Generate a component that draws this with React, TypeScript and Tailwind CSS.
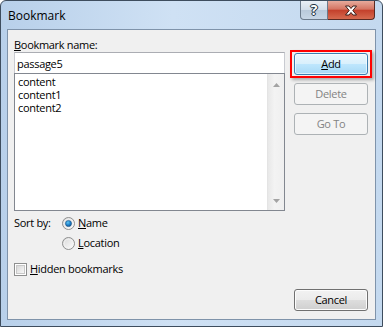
import type { ReactNode } from "react";

type ButtonProps = {
  children: ReactNode;
  variant?: "normal" | "default" | "disabled";
};

function DialogButton({ children, variant = "normal" }: ButtonProps) {
  const look =
    variant === "default"
      ? "border-[#3c7fb1] bg-[linear-gradient(to_bottom,#eaf6fd_0%,#d9f0fc_48%,#bee6fd_52%,#a7d9f5_100%)] text-black shadow-[inset_0_0_0_1px_rgba(255,255,255,0.6)]"
      : variant === "disabled"
        ? "border-[#adb2b5] bg-[#f4f4f4] text-[#838383]"
        : "border-[#707070] bg-[linear-gradient(to_bottom,#f2f2f2_0%,#ebebeb_48%,#dddddd_52%,#cfcfcf_100%)] text-black shadow-[inset_0_0_0_1px_#fcfcfc]";
  return (
    <div className={`flex h-[22px] w-[74px] items-center justify-center rounded-[3px] border text-[11px] ${look}`}>
      {children}
    </div>
  );
}

function Radio({ checked }: { checked?: boolean }) {
  return (
    <svg width="13" height="13" viewBox="0 0 13 13" className="shrink-0">
      <defs>
        <linearGradient id="radioFill" x1="0" y1="0" x2="1" y2="1">
          <stop offset="0" stopColor="#d6d6d6" />
          <stop offset="1" stopColor="#ffffff" />
        </linearGradient>
        <radialGradient id="radioDot" cx="0.4" cy="0.35" r="0.7">
          <stop offset="0" stopColor="#5ec4f2" />
          <stop offset="0.6" stopColor="#1a7cc6" />
          <stop offset="1" stopColor="#0d4f8c" />
        </radialGradient>
      </defs>
      <circle cx="6.5" cy="6.5" r="6" fill="url(#radioFill)" stroke="#8e8f8f" />
      <circle cx="6.5" cy="6.5" r="4.4" fill="none" stroke="#f4f4f4" strokeWidth="0.8" />
      {checked && <circle cx="6.5" cy="6.5" r="3.1" fill="url(#radioDot)" stroke="#1b4f7d" strokeWidth="0.5" />}
    </svg>
  );
}

function Checkbox() {
  return (
    <div className="flex h-[13px] w-[13px] shrink-0 items-center justify-center border border-[#8e8f8f] bg-white">
      <div className="h-[9px] w-[9px] border border-[#c8c8c8] bg-[linear-gradient(135deg,#d8d8d8,#f8f8f8)]" />
    </div>
  );
}

function Arrow({ up }: { up?: boolean }) {
  return (
    <svg width="7" height="4" viewBox="0 0 7 4">
      <path d={up ? "M0 4 L3.5 0 L7 4 Z" : "M0 0 L3.5 4 L7 0 Z"} fill="#a3a3a3" />
    </svg>
  );
}

const bookmarks = ["content", "content1", "content2"];

export default function App() {
  return (
    <div className="flex h-[327px] w-[383px] flex-col rounded-t-[6px] border border-[#3e4d5e] bg-[linear-gradient(to_right,#b8d0ea_0%,#cfe1f4_45%,#c4d9ef_100%)] px-[6px] pb-[6px] font-['Segoe_UI','Open_Sans',sans-serif] text-[11px] tracking-[-0.3px] text-black">
      {/* title bar */}
      <div className="flex h-[28px] items-start justify-between">
        <span className="pt-[6px] pl-[1px] text-[12px] tracking-normal text-black">Bookmark</span>
        <div className="mr-[1px] flex">
          <div className="flex h-[19px] w-[28px] items-center justify-center rounded-bl-[4px] border border-t-0 border-[#6b7a8b] bg-[linear-gradient(to_bottom,#e9eff6_0%,#d2dde9_50%,#b9c9da_51%,#c7d6e6_100%)]">
            <span className="text-[14px] font-bold leading-none text-white [text-shadow:0_0_1px_#243446,0_0_1px_#243446,1px_0_0_#243446,-1px_0_0_#243446,0_1px_0_#243446,0_-1px_0_#243446]">
              ?
            </span>
          </div>
          <div className="flex h-[19px] w-[47px] items-center justify-center rounded-br-[4px] border border-l-0 border-t-0 border-[#5a2a22] bg-[linear-gradient(to_bottom,#e7aa9c_0%,#d57563_45%,#c4412c_52%,#d66a4f_100%)]">
            <svg width="14" height="11" viewBox="0 0 14 11">
              <path
                d="M1.5 1 L5 1 L7 3.5 L9 1 L12.5 1 L8.8 5.5 L12.5 10 L9 10 L7 7.5 L5 10 L1.5 10 L5.2 5.5 Z"
                fill="#ffffff"
                stroke="#3b1d18"
                strokeWidth="1"
                strokeLinejoin="round"
              />
            </svg>
          </div>
        </div>
      </div>

      {/* client area */}
      <div className="flex flex-1 border border-[#7f93aa] bg-[#f0f0f0] pl-[6px] pr-[3px]">
        <div className="flex w-[271px] flex-col pt-[7px]">
          <div className="h-[15px] leading-[15px]">
            <u>B</u>ookmark name:
          </div>
          <div className="h-[21px] border border-b-0 border-[#abadb3] border-x-[#c9cbd1] bg-white pl-[2px] pt-[3px] leading-[15px]">
            passage5
          </div>
          <div className="flex h-[138px] border border-[#828790] bg-white">
            <div className="flex-1 pl-[3px] pt-[1px]">
              {bookmarks.map((b) => (
                <div key={b} className="h-[13px] leading-[13px]">
                  {b}
                </div>
              ))}
            </div>
            <div className="flex w-[17px] flex-col items-center justify-between border-l border-[#e4e4e4] bg-[linear-gradient(to_right,#e8e8e8,#f3f3f3_40%,#efefef)] pt-[9px] pb-[7px]">
              <Arrow up />
              <Arrow />
            </div>
          </div>

          <div className="mt-[2px] flex">
            <div className="h-[20px] w-[48px] leading-[20px]">Sort by:</div>
            <div className="flex flex-col">
              <div className="flex h-[20px] items-center gap-[3px]">
                <Radio checked />
                <span>
                  <u>N</u>ame
                </span>
              </div>
              <div className="flex h-[20px] items-center gap-[3px]">
                <Radio />
                <span>
                  <u>L</u>ocation
                </span>
              </div>
            </div>
          </div>

          <div className="mt-[7px] flex h-[19px] items-center gap-[3px]">
            <Checkbox />
            <span>
              <u>H</u>idden bookmarks
            </span>
          </div>
        </div>

        <div className="ml-[5px] flex w-[82px] flex-col pt-[20px] pb-[8px]">
          <div className="border-2 border-[#ff0000] px-[2px] py-[1px] shadow-[2px_2px_3px_rgba(0,0,0,0.3)]">
            <DialogButton variant="default">
              <span>
                <u>A</u>dd
              </span>
            </DialogButton>
          </div>
          <div className="mt-[5px] pl-[4px]">
            <DialogButton variant="disabled">Delete</DialogButton>
          </div>
          <div className="mt-[8px] pl-[4px]">
            <DialogButton variant="disabled">Go To</DialogButton>
          </div>
          <div className="mt-auto pl-[4px]">
            <DialogButton>Cancel</DialogButton>
          </div>
        </div>
      </div>
    </div>
  );
}
